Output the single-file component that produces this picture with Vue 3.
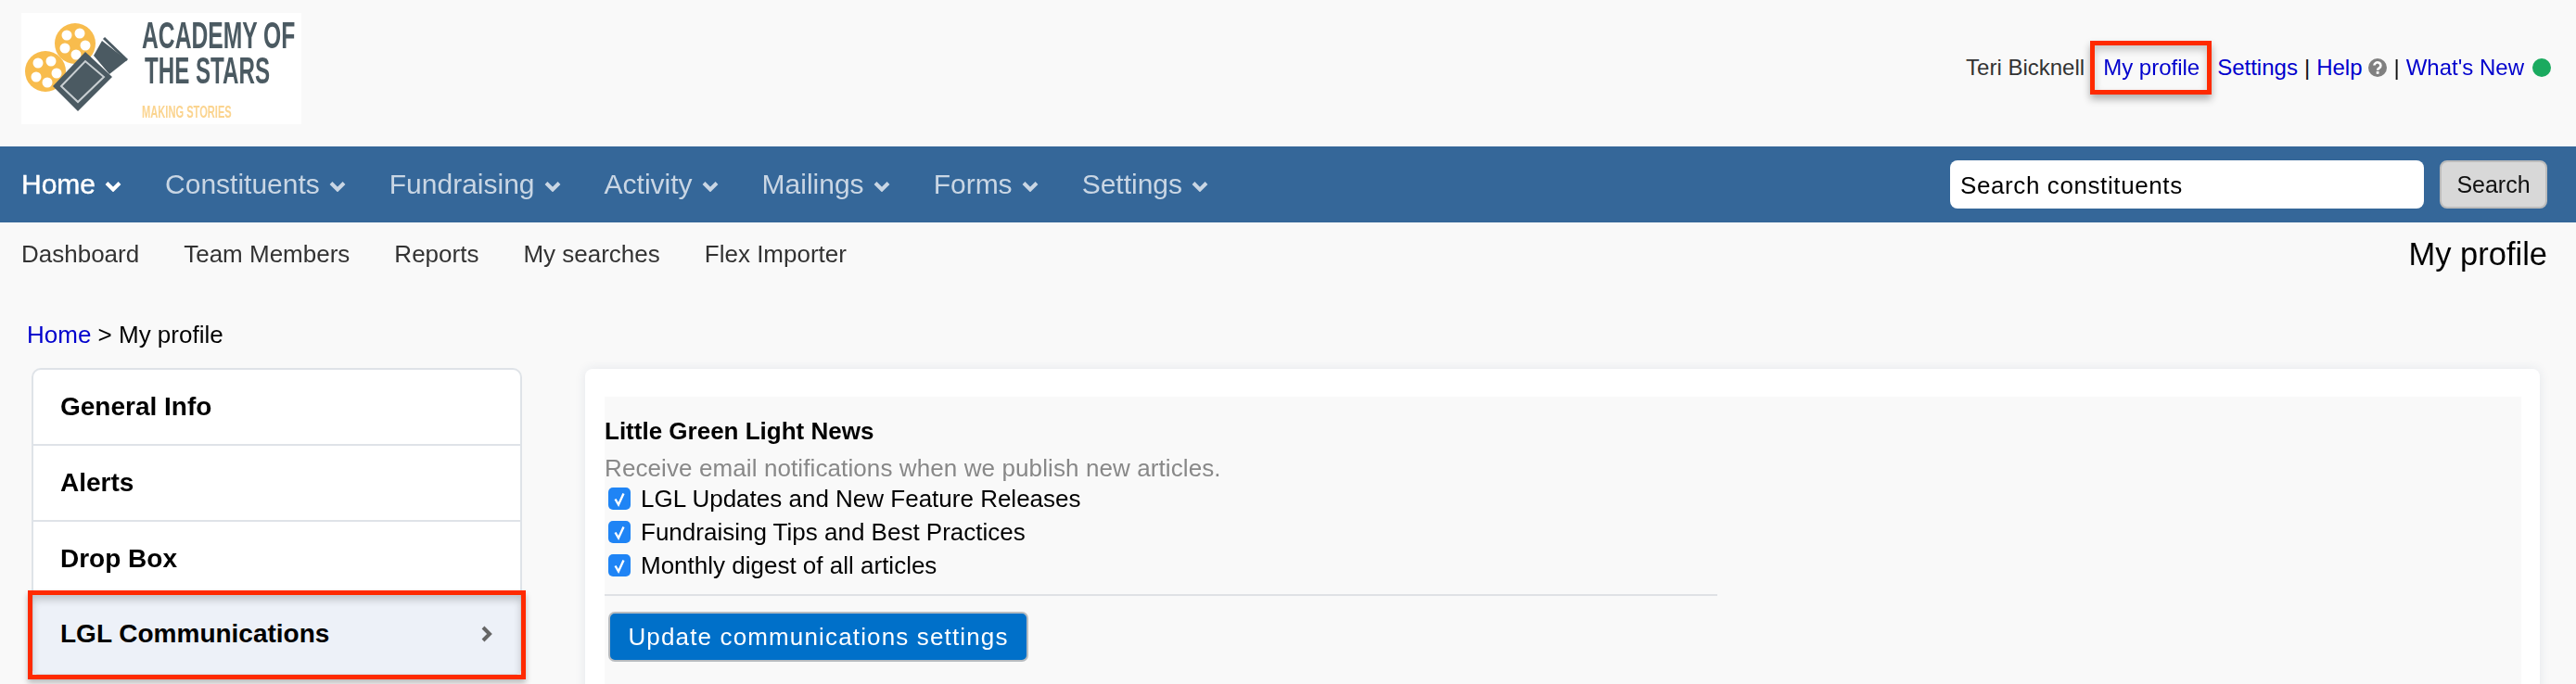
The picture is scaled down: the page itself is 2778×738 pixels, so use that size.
<script setup>
const mainNav = [
  { label: 'Home', active: true },
  { label: 'Constituents' },
  { label: 'Fundraising' },
  { label: 'Activity' },
  { label: 'Mailings' },
  { label: 'Forms' },
  { label: 'Settings' },
]
const subNav = ['Dashboard', 'Team Members', 'Reports', 'My searches', 'Flex Importer']
const sideItems = ['General Info', 'Alerts', 'Drop Box']
const options = [
  'LGL Updates and New Feature Releases',
  'Fundraising Tips and Best Practices',
  'Monthly digest of all articles',
]
</script>

<template>
  <div class="page">
    <header class="top">
      <svg class="logo" viewBox="0 0 302 120" width="302" height="120">
        <defs>
          <filter id="soft"><feGaussianBlur stdDeviation="0.55" /></filter>
        </defs>
        <rect width="302" height="120" fill="#fff" />
        <g filter="url(#soft)">
          <g fill="#f8bc4e">
            <circle cx="58" cy="33" r="22" />
            <circle cx="26" cy="63" r="22" />
          </g>
          <g fill="#fff">
            <circle cx="49" cy="24" r="5.5" /><circle cx="63" cy="22" r="5.5" /><circle cx="47" cy="38" r="5.5" />
            <circle cx="69" cy="35" r="5.5" /><circle cx="59" cy="45" r="5.5" />
            <circle cx="18" cy="54" r="5.5" /><circle cx="32" cy="52" r="5.5" /><circle cx="16" cy="69" r="5.5" />
            <circle cx="38" cy="65" r="5.5" /><circle cx="28" cy="75" r="5.5" />
          </g>
          <polygon points="34,79 69,42 98,69 61,106" fill="#4b5a62" />
          <polygon points="43,79 69,52 89,69 61,96" fill="none" stroke="#c9cfd2" stroke-width="2" />
          <polygon points="78,46 87,30 114,51 95,66" fill="#4b5a62" />
          <line x1="89" y1="27" x2="114" y2="51" stroke="#4b5a62" stroke-width="3" />
          <text class="logo-title" transform="translate(130 38) scale(.617 1)">ACADEMY OF</text>
          <text class="logo-title" transform="translate(133 76) scale(.604 1)">THE STARS</text>
          <text class="logo-tag" transform="translate(130 113) scale(.618 1)">MAKING STORIES</text>
        </g>
      </svg>
      <div class="user-links">
        <span class="user-name">Teri Bicknell</span>
        <a class="link profile-link">My profile</a>
        <a class="link">Settings</a>
        <span class="sep">|</span>
        <a class="link">Help</a>
        <svg class="help" viewBox="0 0 20 20" width="20" height="20">
          <circle cx="10" cy="10" r="10" fill="#808080" />
          <path d="M6.4 7.6a3.5 3.3 0 1 1 5.4 2.8c-1.1.7-1.7 1.2-1.7 2.3" fill="none" stroke="#fff" stroke-width="2.6" />
          <rect x="8.7" y="14" width="2.8" height="2.8" fill="#fff" />
        </svg>
        <span class="sep">|</span>
        <a class="link">What's New</a>
        <span class="dot"></span>
      </div>
    </header>

    <nav class="main-nav">
      <div class="nav-items">
        <a v-for="item in mainNav" :key="item.label" class="nav-item" :class="{ active: item.active }">
          {{ item.label }}
          <svg viewBox="0 0 18 12" width="18" height="12">
            <path d="M2 2.5l7 7 7-7" fill="none" stroke="currentColor" stroke-width="4" />
          </svg>
        </a>
      </div>
      <form class="search" @submit.prevent>
        <input class="search-input" type="text" placeholder="Search constituents" />
        <button class="search-btn" type="submit">Search</button>
      </form>
    </nav>

    <div class="sub-nav">
      <div class="sub-items">
        <a v-for="item in subNav" :key="item">{{ item }}</a>
      </div>
      <h1 class="page-title">My profile</h1>
    </div>

    <div class="crumbs"><a class="link">Home</a> &gt; My profile</div>

    <main class="content">
      <aside class="side">
        <a v-for="item in sideItems" :key="item" class="side-item">{{ item }}</a>
        <a class="side-item current">
          LGL Communications
          <svg viewBox="0 0 14 18" width="14" height="18">
            <path d="M3 2l7 7-7 7" fill="none" stroke="#666" stroke-width="4" />
          </svg>
        </a>
      </aside>
      <section class="card">
        <div class="panel">
          <h2 class="panel-title">Little Green Light News</h2>
          <p class="panel-note">Receive email notifications when we publish new articles.</p>
          <label v-for="opt in options" :key="opt" class="option">
            <span class="check">
              <svg viewBox="0 0 24 24" width="24" height="24">
                <path d="M7.5 12.5l3.5 6 5.5-12" fill="none" stroke="#fff" stroke-width="2.4" />
              </svg>
            </span>
            {{ opt }}
          </label>
          <hr class="rule" />
          <button class="update-btn" type="button">Update communications settings</button>
        </div>
      </section>
    </main>
  </div>
</template>

<style>
html, body { margin: 0; overflow: hidden; }
</style>

<style scoped>
.page {
  width: 2778px;
  height: 738px;
  overflow: hidden;
  background: #f9f9f9;
  color: #000;
  font-family: "Liberation Sans", Arial, sans-serif;
  font-size: 26px;
}
.top {
  height: 158px;
  box-sizing: border-box;
  padding: 14px 27px 0 23px;
  display: flex;
  justify-content: space-between;
  align-items: flex-start;
}
.logo { display: block; }
.logo-title { font: 700 40px "Liberation Sans", sans-serif; fill: #4b5a62; }
.logo-tag { font: 700 18px "Liberation Sans", sans-serif; fill: #fbd48f; }
.user-links {
  height: 118px;
  display: flex;
  align-items: center;
  font-size: 24px;
}
.user-name { color: #333; margin-right: 20px; }
.link { color: #0000cd; text-decoration: none; }
.profile-link { position: relative; margin-right: 19px; }
.profile-link::after {
  content: "";
  position: absolute;
  inset: -15px -13px -15px -14px;
  border: 5px solid #ff2a00;
  box-shadow: 0 5px 8px rgba(0, 0, 0, .3), inset 0 5px 8px rgba(0, 0, 0, .2);
}
.sep { margin: 0 7px; color: #111; }
.help { margin-left: 7px; }
.dot {
  width: 20px;
  height: 20px;
  margin-left: 9px;
  border-radius: 50%;
  background: #1aaa5f;
}
.main-nav {
  height: 82px;
  box-sizing: border-box;
  padding: 0 31px 0 23px;
  background: #356799;
  display: flex;
  justify-content: space-between;
  align-items: center;
}
.nav-items { display: flex; gap: 47px; }
.nav-item {
  display: flex;
  align-items: center;
  gap: 10px;
  font-size: 30px;
  color: #c9d6e4;
}
.nav-item.active { color: #fff; -webkit-text-stroke: .4px #fff; }
.nav-item svg { margin-top: 3px; }
.search { display: flex; gap: 17px; }
.search-input {
  width: 511px;
  height: 52px;
  box-sizing: border-box;
  padding: 2px 11px 0;
  border: 0;
  border-radius: 8px;
  background: #fff;
  font: 26px "Liberation Sans", Arial, sans-serif;
  letter-spacing: .6px;
  outline: none;
}
.search-input::placeholder { color: #000; opacity: 1; }
.search-btn {
  width: 116px;
  height: 52px;
  box-sizing: border-box;
  padding: 0;
  border: 2px solid #bcbcbc;
  border-radius: 8px;
  background: #d8d8d8;
  color: #111;
  font: 25px "Liberation Sans", Arial, sans-serif;
}
.sub-nav {
  height: 68px;
  box-sizing: border-box;
  padding: 0 31px 0 23px;
  display: flex;
  justify-content: space-between;
  align-items: center;
}
.sub-items { display: flex; gap: 48px; color: #333; }
.page-title { margin: 0; font-size: 34.5px; font-weight: 400; }
.crumbs {
  padding: 38px 0 0 29px;
  height: 51px;
  line-height: 30px;
}
.content {
  display: flex;
  align-items: flex-start;
  gap: 68px;
  padding-left: 34px;
}
.side {
  width: 529px;
  flex: none;
  box-sizing: border-box;
  border: 2px solid #dfe3e8;
  border-radius: 10px;
  background: #fff;
}
.side-item {
  height: 82px;
  box-sizing: border-box;
  padding: 0 29px;
  display: flex;
  align-items: center;
  justify-content: space-between;
  border-bottom: 2px solid #dfe3e8;
  font-size: 28px;
  font-weight: 700;
}
.side-item.current {
  position: relative;
  height: 86px;
  margin-top: -4px;
  border-bottom: 0;
  background: #edf1f8;
}
.side-item.current::after {
  content: "";
  position: absolute;
  inset: -4px -6px -6px -6px;
  border: 5px solid #ff2a00;
  box-shadow: 0 4px 6px rgba(0, 0, 0, .25), inset 0 5px 8px rgba(0, 0, 0, .2);
}
.card {
  width: 2108px;
  height: 420px;
  margin-top: 1px;
  flex: none;
  box-sizing: border-box;
  padding: 30px 20px 0 21px;
  border-radius: 8px;
  background: #fff;
  box-shadow: 0 0 12px rgba(40, 70, 110, .1);
}
.panel {
  height: 400px;
  box-sizing: border-box;
  padding-top: 22px;
  background: #f9f9f9;
}
.panel-title { margin: 0; font-size: 26px; font-weight: 700; line-height: 30px; }
.panel-note { margin: 10px 0 0; color: #888; line-height: 30px; letter-spacing: .1px; }
.option {
  height: 36px;
  display: flex;
  align-items: center;
  gap: 11px;
  padding-left: 4px;
}
.check {
  width: 24px;
  height: 24px;
  border-radius: 5px;
  background: #1f84f5;
}
.check svg { display: block; }
.rule {
  width: 1200px;
  height: 2px;
  margin: 13px 0 17px;
  border: 0;
  background: #dfe1e5;
}
.update-btn {
  display: block;
  width: 453px;
  height: 54px;
  margin-left: 4px;
  box-sizing: border-box;
  border: 2px solid #b8bcc0;
  border-radius: 7px;
  background: #0070c9;
  color: #fff;
  font: 26px "Liberation Sans", Arial, sans-serif;
  letter-spacing: 1.15px;
}
</style>
